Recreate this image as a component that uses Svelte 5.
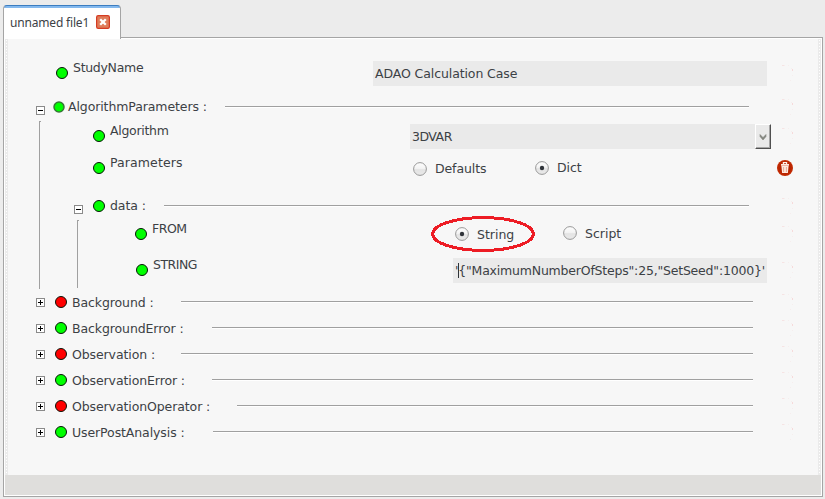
<script>
  const collapsed = [
    { name: 'Background :', ok: false, size: 'w109' },
    { name: 'BackgroundError :', ok: true, size: 'w140' },
    { name: 'Observation :', ok: false, size: 'w109' },
    { name: 'ObservationError :', ok: true, size: 'w140' },
    { name: 'ObservationOperator :', ok: false, size: 'w165' },
    { name: 'UserPostAnalysis :', ok: true, size: 'w141' }
  ];
</script>

{#snippet dot(ok = true, soft = false)}
  <svg class="dot" class:soft width="12" height="12" viewBox="0 0 12 12">
    <circle cx="6" cy="6" r={soft ? 5 : 5.5} fill={ok ? '#00ff00' : '#ff0000'} stroke={soft ? '#347934' : '#071407'} stroke-width={soft ? 1.5 : 1} />
  </svg>
{/snippet}

{#snippet toggle(open)}
  <svg class="toggle" width="9" height="9" viewBox="0 0 9 9" shape-rendering="crispEdges">
    <rect x=".5" y=".5" width="8" height="8" fill="#fff" stroke="#8a8a8a" />
    <path d={open ? 'M2 4.5h5' : 'M2 4.5h5M4.5 2v5'} stroke="#000" />
  </svg>
{/snippet}

{#snippet ghost()}
  <svg class="ghost" width="16" height="18" viewBox="0 0 16 18" shape-rendering="crispEdges">
    <path d="M5 0h2v1H5z" fill="#f6e4e4" />
    <path d="M7 0h1v1H7zM11 0h1v1h-1zM14 3h1v1h-1zM15 10h1v1h-1zM13 15h1v1h-1z" fill="#f6eeee" />
    <path d="M15 4h1v2h-1z" fill="#f6dada" />
  </svg>
{/snippet}

{#snippet radio(on)}
  <svg class="radio" width="14" height="14" viewBox="0 0 14 14">
    <defs>
      <linearGradient id="knob" x2="0" y2="1"><stop stop-color="#fdfdfd" /><stop offset=".45" stop-color="#f4f4f4" /><stop offset=".55" stop-color="#e4e4e4" /><stop offset="1" stop-color="#e9e9e9" /></linearGradient>
    </defs>
    <circle cx="7" cy="7" r="6.4" fill="url(#knob)" stroke="#999" stroke-width="1" />
    {#if on}<circle cx="7" cy="7" r="2.2" fill="#30343a" />{/if}
  </svg>
{/snippet}

<div class="window">
  <div class="tabs">
    <div class="tab">
      <span class="title">unnamed file1</span>
      <svg width="14" height="14" viewBox="0 0 14 14">
        <rect x=".6" y=".6" width="12.8" height="12.8" rx="1.6" fill="#df7c5a" stroke="#d53b22" stroke-width="1.2" />
        <path d="M4.2 4.2l5.6 5.6M9.8 4.2L4.2 9.8" stroke="#fff" stroke-width="2.3" />
      </svg>
    </div>
  </div>
  <div class="panel">
    <div class="content">
      <div class="tree">
        <div class="row study">
          {@render dot()}
          <span class="label">StudyName</span>
          <div class="field wide">ADAO Calculation Case</div>
          {@render ghost()}
        </div>
        <div class="row params-head">
          {@render toggle(true)}
          {@render dot(true, true)}
          <span class="label">AlgorithmParameters :</span>
          <i class="rule"></i>
          {@render ghost()}
        </div>
        <div class="branch outer">
          <div class="row algorithm">
            {@render dot()}
            <span class="label">Algorithm</span>
            <div class="field combo">
              <span class="caps">3DVAR</span>
              <button aria-label="Open list"><svg width="8" height="7" viewBox="0 0 8 7"><path d="M1 .5l3 3 3-3v2l-3 3.5-3-3.5z" fill="#84867f" stroke="#84867f" stroke-width=".6" /></svg></button>
            </div>
            {@render ghost()}
          </div>
          <div class="row parameters">
            {@render dot()}
            <span class="label">Parameters</span>
            <div class="choices">
              <div class="choice low">{@render radio(false)}<span>Defaults</span></div>
              <div class="choice">{@render radio(true)}<span>Dict</span></div>
            </div>
            <svg class="trash" width="16" height="16" viewBox="0 0 16 16">
              <defs><radialGradient id="red"><stop stop-color="#a71c00" /><stop offset=".7" stop-color="#b92400" /><stop offset="1" stop-color="#c52d04" /></radialGradient></defs>
              <circle cx="8" cy="8" r="8" fill="url(#red)" />
              <path d="M4 4.1h8v1.7H4zM4.4 6h7.2l-.7 7H5.1z" fill="#ffe9df" />
              <path d="M6.4 4V2.7h3.2V4" fill="none" stroke="#fff2e9" stroke-width="1.2" />
              <path d="M6.6 7v5M9.4 7v5" stroke="#e39a80" stroke-width=".8" />
            </svg>
          </div>
          <div class="row data-head">
            {@render toggle(true)}
            {@render dot()}
            <span class="label">data :</span>
            <i class="rule"></i>
            {@render ghost()}
          </div>
          <div class="branch inner">
            <div class="row from">
              {@render dot()}
              <span class="label caps">FROM</span>
              <div class="choices">
                <div class="choice picked">{@render radio(true)}<span>String</span>
                  <svg class="mark" width="104" height="36" viewBox="0 0 104 36" shape-rendering="crispEdges"><ellipse cx="52" cy="18" rx="50.4" ry="16.4" fill="none" stroke="#ed1c24" stroke-width="3" /></svg>
                </div>
                <div class="choice">{@render radio(false)}<span>Script</span></div>
              </div>
              {@render ghost()}
            </div>
            <div class="row string">
              {@render dot()}
              <span class="label caps">STRING</span>
              <div class="field text"><span>'</span><i class="caret"></i><span>{'{"MaximumNumberOfSteps":25,"SetSeed":1000}\''}</span></div>
              {@render ghost()}
            </div>
          </div>
        </div>
        {#each collapsed as item}
          <div class="row closed">
            {@render toggle(false)}
            {@render dot(item.ok)}
            <span class="label {item.size}">{item.name}</span>
            <i class="rule"></i>
            {@render ghost()}
          </div>
        {/each}
      </div>
    </div>
    <div class="status"></div>
  </div>
</div>

<style>
  :global(body) { background: #ececec; overflow: hidden; }
  .window { width: 825px; height: 499px; box-sizing: border-box; padding: 5px 0 0 3px; background: #ececec; display: flex; flex-direction: column; color: #3c4145; font: 12.5px/16px "DejaVu Sans", sans-serif; letter-spacing: -0.1px; }
  .window * { box-sizing: border-box; }
  svg { display: block; flex: none; }
  .tabs { height: 32px; flex: none; display: flex; }
  .tab { position: relative; z-index: 1; width: 118px; height: 34px; border: 1px solid #a5a5a5; border-top: 1px solid #3c7dc0; border-bottom: 0; border-radius: 4px 4px 0 0; background: linear-gradient(#84b9ee 2px, #fff 2px); padding: 9px 0 0 6px; display: flex; align-items: flex-start; }
  .title { width: 86px; flex: none; font-family: "Noto Sans", "DejaVu Sans", sans-serif; white-space: nowrap; font-size: 12px; letter-spacing: -0.18px; }
  .panel { width: 820px; height: 460px; flex: none; border: 1px solid #a5a5a5; display: flex; flex-direction: column; padding: 1px; background: #fff; }
  .content { height: 436px; padding-top: 21px; background: radial-gradient(circle at 1.5px 1.5px, #fff 0.8px, transparent 0.9px) 0 0 / 3px 3px repeat-y, radial-gradient(circle at 1.5px 1.5px, #fff 0.8px, transparent 0.9px) 813px 0 / 3px 3px repeat-y, linear-gradient(90deg, #ebebeb 3px, #f7f7f7 3px, #f7f7f7 813px, #ebebeb 813px); }
  .tree { width: 788px; display: flex; flex-direction: column; }
  .status { height: 20px; background: #dfdedc; }
  .row { display: flex; align-items: flex-start; }
  .label { white-space: nowrap; flex: none; }
  .caps { letter-spacing: -0.5px; }
  .rule { flex: 1; height: 2px; background: linear-gradient(#a0a0a0 1px, #fff 1px); }

  .study { height: 34px; padding-left: 51px; }
  .study .dot { margin-top: 7px; }
  .study .label { margin-left: 5px; letter-spacing: -0.3px; }
  .study .ghost { margin: 5px 0 0 10px; }
  .field { margin-left: auto; height: 25px; background: #eaeaea; padding: 0 2px; display: flex; align-items: center; white-space: nowrap; }
  .wide { width: 394px; margin-top: 1px; }

  .params-head { height: 27px; padding-left: 31px; }
  .params-head .toggle { margin-top: 12px; }
  .params-head .dot { margin: 7px 0 0 8px; }
  .params-head .label { width: 157px; margin: 5px 0 0 3px; }
  .params-head .rule { margin: 12px 28px 0 0; }
  .params-head .ghost { margin-top: 5px; }

  .branch { position: relative; border-left: 1px solid #a0a0a0; }
  .branch::before { content: ""; position: absolute; top: 0; left: 0; width: 1px; height: 1px; background: #a0a0a0; }
  .outer { margin-left: 34px; height: 168px; }
  .algorithm { height: 31px; padding-left: 53px; }
  .algorithm .dot { margin-top: 9px; }
  .algorithm .label { margin: 2px 0 0 5px; letter-spacing: -0.3px; }
  .combo { width: 361px; margin-top: 3px; padding-right: 0; justify-content: space-between; }
  button { width: 16px; height: 25px; padding: 2px 0 0; display: flex; align-items: center; justify-content: center; border: 1px solid; border-color: #fff #505050 #505050 #fff; box-shadow: inset -1px -1px #a6a6a6; background: #eaeaea; }
  .algorithm .ghost { margin: 7px 0 0 6px; }

  .parameters { height: 32px; padding-left: 53px; }
  .parameters .dot { margin-top: 10px; }
  .parameters .label { margin: 3px 0 0 5px; letter-spacing: 0.1px; }
  .choices { margin-left: auto; display: flex; }
  .choice { display: flex; align-items: center; gap: 8px; height: 16px; }
  .parameters .choices { width: 364px; margin-top: 8px; }
  .low { width: 122px; margin-top: 1px; }
  .trash { margin-top: 8px; }

  .data-head { height: 36px; padding-left: 34px; }
  .data-head .toggle { margin-top: 21px; }
  .data-head .dot { margin: 16px 0 0 10px; }
  .data-head .label { width: 54px; margin: 14px 0 0 5px; }
  .data-head .rule { margin: 21px 28px 0 0; }
  .data-head .ghost { margin-top: 14px; }

  .inner { margin-left: 37px; height: 68px; }
  .from { height: 34px; padding-left: 57px; }
  .from .dot { margin-top: 8px; }
  .from .label { margin: 1px 0 0 5px; }
  .from .choices { width: 322px; margin-top: 5px; }
  .from .choice > span { padding-top: 1px; letter-spacing: 0; }
  .picked { position: relative; width: 108px; margin-top: 1px; }
  .mark { position: absolute; left: -24px; top: -10px; }
  .from .ghost { margin-top: 6px; }
  .string { height: 34px; padding-left: 58px; }
  .string .dot { margin-top: 10px; }
  .string .label { margin: 3px 0 0 5px; }
  .text { width: 314px; margin-top: 4px; letter-spacing: -0.2px; }
  .caret { width: 1px; height: 15px; margin-right: -1px; flex: none; background: #303438; }
  .string .ghost { margin: 8px 0 0 10px; }

  .closed { height: 26px; padding-left: 31px; }
  .closed .toggle { margin-top: 9px; }
  .closed .dot { margin: 7px 0 0 10px; }
  .closed .label { margin: 6px 0 0 5px; }
  .closed .rule { margin: 12px 24px 0 0; }
  .closed .ghost { margin-top: 5px; }
  .w109 { width: 109px; }
  .w140 { width: 140px; }
  .w141 { width: 141px; }
  .w165 { width: 165px; }
</style>
